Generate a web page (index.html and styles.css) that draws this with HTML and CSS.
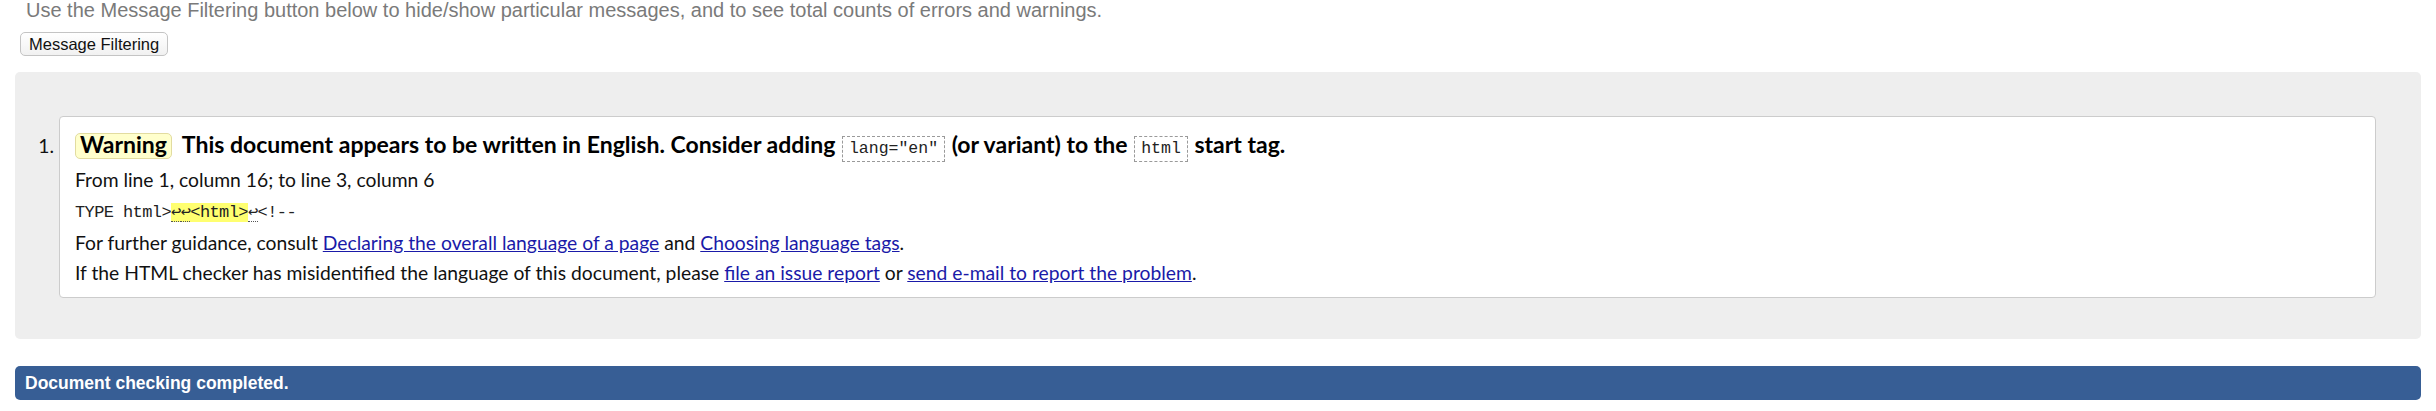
FILE: index.html
```html
<!DOCTYPE html>
<html lang="en">
<head>
<meta charset="utf-8">
<title>Validator results</title>
<link rel="stylesheet" href="styles.css">
</head>
<body>
<div class="page">
  <p class="intro">Use the Message Filtering button below to hide/show particular messages, and to see total counts of errors and warnings.</p>
  <button class="filter-btn" type="button">Message Filtering</button>
  <div class="results">
    <ol class="messages">
      <li class="message">
        <p class="title"><span class="badge">Warning</span> This document appears to be written in English. Consider adding <code class="tag">lang="en"</code> (or variant) to the <code class="tag">html</code> start tag.</p>
        <p class="location">From line 1, column 16; to line 3, column 6</p>
        <p class="extract"><code>TYPE html&gt;<b><span class="lf">↩</span><span class="lf">↩</span>&lt;html&gt;</b><span class="lf">↩</span>&lt;!--</code></p>
        <p class="line">For further guidance, consult <a href="#">Declaring the overall language of a page</a> and <a href="#">Choosing language tags</a>.</p>
        <p class="line">If the HTML checker has misidentified the language of this document, please <a href="#">file an issue report</a> or <a href="#">send e-mail to report the problem</a>.</p>
      </li>
    </ol>
  </div>
  <p class="done">Document checking completed.</p>
</div>
</body>
</html>
```

FILE: styles.css
```css
html, body {
  margin: 0;
  padding: 0;
  background: #fff;
}

.page {
  padding: 0 15px;
  font-family: "Liberation Sans", Arial, sans-serif;
}

.intro {
  margin: -2px 0 0 11px;
  font-size: 20px;
  line-height: 24px;
  color: #7a7a7a;
}

.filter-btn {
  display: block;
  margin: 10px 0 0 5px;
  padding: 0 8px;
  height: 24px;
  font-family: "Liberation Sans", Arial, sans-serif;
  font-size: 16.5px;
  line-height: 22px;
  color: #111;
  background: linear-gradient(#ffffff, #f1f1f1);
  border: 1px solid #c4c4c4;
  border-radius: 5px;
}

.results {
  margin-top: 16px;
  background: #eeeeee;
  border-radius: 5px;
  padding: 44px 45px 41px 44px;
}

.messages {
  margin: 0;
  padding: 0;
  list-style: decimal outside;
  font-family: Lato, "Noto Sans", sans-serif;
  font-size: 19.3px;
  color: #111;
}

.message {
  background: #fff;
  border: 1px solid #cccccc;
  border-radius: 4px;
  padding: 10px 15px 9px 15px;
}

.message p {
  margin: 0;
  line-height: 30px;
}

.message .title {
  font-size: 23px;
  font-weight: bold;
  line-height: 34px;
  margin-bottom: 3px;
  color: #000;
}

.badge {
  display: inline-block;
  line-height: 20px;
  padding: 0 4px 4px 4px;
  margin-right: 5px;
  background: #ffffcc;
  border: 1px solid #e2dca0;
  border-radius: 5px;
  color: #000;
}

.tag {
  display: inline-block;
  font-family: "Liberation Mono", "Courier New", monospace;
  font-weight: normal;
  font-size: 16.5px;
  line-height: 24px;
  padding: 0 6px;
  margin: 0 1px;
  border: 1px dashed #9a9a9a;
  color: #222;
}

.extract code {
  font-family: "Liberation Mono", "Courier New", monospace;
  font-size: 17px;
  letter-spacing: -0.6px;
  color: #222;
}

.extract b {
  font-weight: normal;
  background: #ffff70;
}

.lf {
  font-family: "DejaVu Sans Mono", monospace;
  border-bottom: 1px dotted #555;
}

.message a {
  color: #1a1aa8;
  text-decoration: underline;
}

.done {
  margin: 27px 0 0 0;
  height: 34px;
  line-height: 34px;
  padding: 0 10px;
  background: #375e95;
  border-radius: 5px;
  color: #fff;
  font-weight: bold;
  font-size: 17.5px;
}
```
